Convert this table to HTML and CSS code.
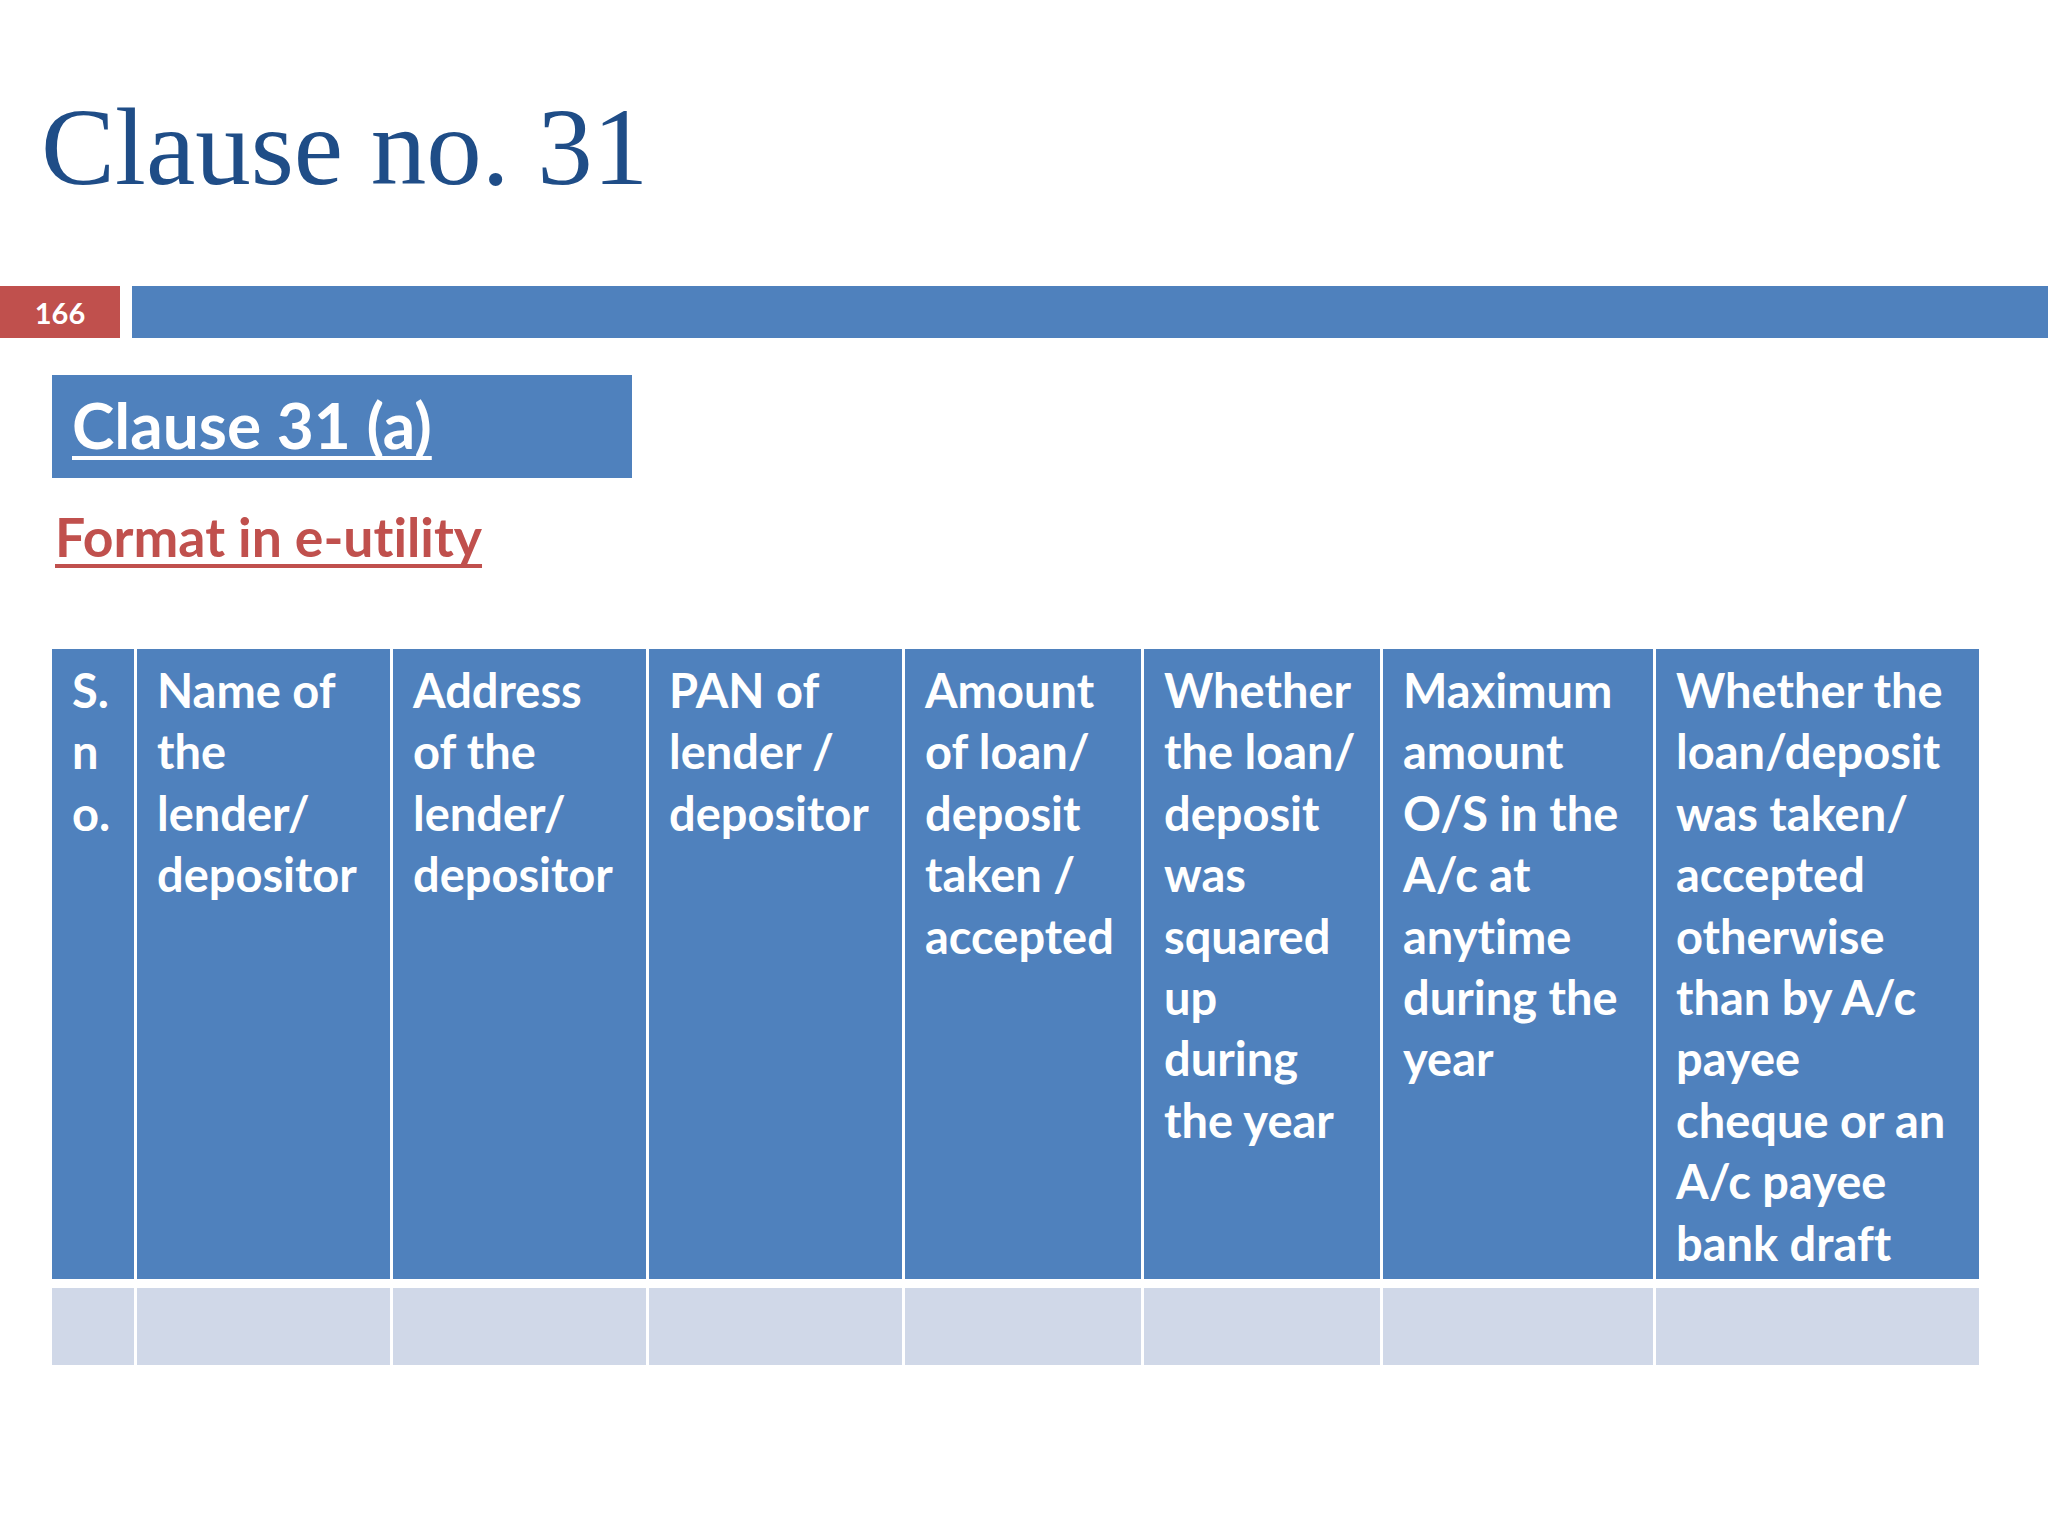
FILE: index.html
```html
<!DOCTYPE html>
<html lang="en">
<head>
<meta charset="utf-8">
<title>Clause no. 31</title>
<link rel="stylesheet" href="styles.css">
</head>
<body>
<div class="slide">
  <h1 class="title">Clause no. 31</h1>
  <div class="bar-row">
    <div class="page-no">166</div>
    <div class="bar"></div>
  </div>
  <div class="content">
    <div class="sub-box"><span class="sub-title">Clause 31 (a)</span></div>
    <div class="format">Format in e-utility</div>
    <div class="grid">
      <div class="hcell c1">S.<br>n<br>o.</div>
      <div class="hcell c2">Name of<br>the<br>lender/<br>depositor</div>
      <div class="hcell c3">Address<br>of the<br>lender/<br>depositor</div>
      <div class="hcell c4">PAN of<br>lender /<br>depositor</div>
      <div class="hcell c5">Amount<br>of loan/<br>deposit<br>taken /<br>accepted</div>
      <div class="hcell c6">Whether<br>the loan/<br>deposit<br>was<br>squared<br>up<br>during<br>the year</div>
      <div class="hcell c7">Maximum<br>amount<br>O/S in the<br>A/c at<br>anytime<br>during the<br>year</div>
      <div class="hcell c8">Whether the<br>loan/deposit<br>was taken/<br>accepted<br>otherwise<br>than by A/c<br>payee<br>cheque or an<br>A/c payee<br>bank draft</div>
      <div class="dcell"></div>
      <div class="dcell"></div>
      <div class="dcell"></div>
      <div class="dcell"></div>
      <div class="dcell"></div>
      <div class="dcell"></div>
      <div class="dcell"></div>
      <div class="dcell"></div>
    </div>
  </div>
</div>
</body>
</html>
```
FILE: styles.css
```css
html, body {
  margin: 0;
  padding: 0;
  background: #ffffff;
}
.slide {
  width: 2048px;
  height: 1536px;
  overflow: hidden;
  background: #ffffff;
  font-variant-ligatures: none;
}
.title {
  margin: 0;
  padding: 91px 0 0 41px;
  font-family: "Liberation Serif", "DejaVu Serif", serif;
  font-weight: normal;
  font-size: 111px;
  line-height: 1;
  color: #1f4d87;
  height: 112px;
}
.bar-row {
  display: flex;
  gap: 12px;
  margin-top: 83px;
  height: 52px;
}
.page-no {
  width: 120px;
  flex: none;
  background: #c0504d;
  color: #ffffff;
  font-family: Lato, "Liberation Sans", sans-serif;
  font-weight: bold;
  font-size: 29px;
  display: flex;
  align-items: center;
  justify-content: center;
}
.bar {
  flex: 1;
  background: #4f81bd;
}
.content {
  padding-left: 52px;
}
.sub-box {
  margin-top: 37px;
  width: 580px;
  height: 103px;
  box-sizing: border-box;
  background: #4f81bd;
  padding: 11px 0 0 20px;
}
.sub-title {
  font-family: Lato, "Liberation Sans", sans-serif;
  font-weight: bold;
  font-size: 64px;
  line-height: 78px;
  color: #ffffff;
  text-decoration: underline;
  text-decoration-thickness: 4px;
  text-underline-offset: 7px;
  text-decoration-skip-ink: none;
}
.format {
  margin-top: 27px;
  padding-left: 3px;
  font-family: Lato, "Liberation Sans", sans-serif;
  font-weight: bold;
  font-size: 53.5px;
  line-height: 62px;
  color: #c0504d;
  text-decoration: underline;
  text-decoration-thickness: 4px;
  text-underline-offset: 7px;
  text-decoration-skip-ink: none;
}
.grid {
  margin-top: 82px;
  width: 1927px;
  display: grid;
  grid-template-columns: 82px 253px 253px 253px 236px 236px 270px 323px;
  column-gap: 3px;
  row-gap: 9px;
}
.hcell {
  background: #4f81bd;
  color: #ffffff;
  font-family: Lato, "Liberation Sans", sans-serif;
  font-weight: bold;
  font-size: 47px;
  line-height: 61.4px;
  padding: 11px 0 5px 20px;
  white-space: nowrap;
  overflow: hidden;
}
.dcell {
  background: #d0d8e8;
  height: 77px;
}
```
